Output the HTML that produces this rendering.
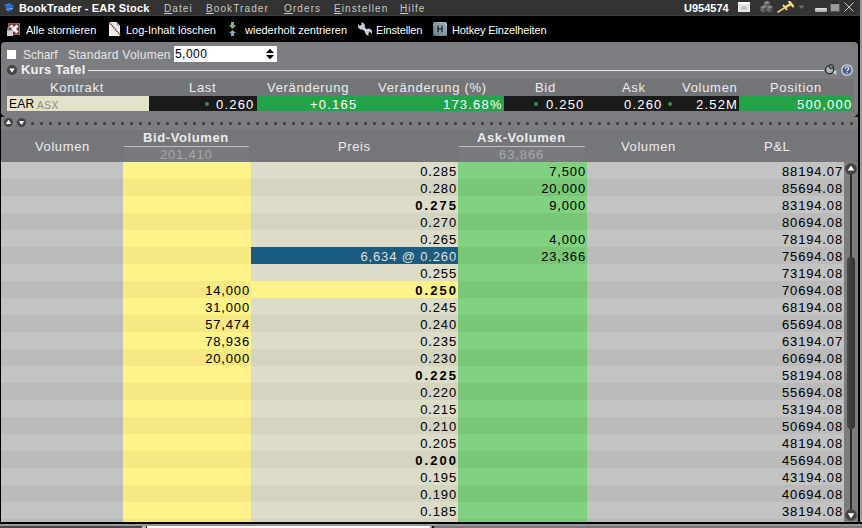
<!DOCTYPE html>
<html><head><meta charset="utf-8">
<style>
*{margin:0;padding:0;box-sizing:border-box}
html,body{width:862px;height:528px;overflow:hidden;background:#000;font-family:"Liberation Sans",sans-serif;position:relative}
.abs{position:absolute;white-space:nowrap}
#title{position:absolute;left:0;top:0;width:860px;height:16px;background:#333;border-bottom:1px solid #3e3e3e}
#rb{position:absolute;left:860px;top:0;width:2px;height:528px;background:#999}
.t{font-size:11px;color:#fff;font-weight:bold;top:2px;letter-spacing:0.15px}
.m{font-size:10px;color:#c8c8c8;top:3px;letter-spacing:1.1px}
.tbt{font-size:11px;color:#fff;top:24px}
#p1{position:absolute;left:1px;top:42px;width:857px;height:480px;background:#7c7d81;border-radius:4px 4px 0 0}
.lbl{font-size:12px;color:#e6e6e6;top:48px !important}
.hdr1{position:absolute;left:6px;top:79px;width:848px;height:17px;background:#737478}
.h1t{position:absolute;top:80px;font-size:13px;color:#ececec;white-space:nowrap;letter-spacing:0.7px}
.drow{position:absolute;top:96px;height:15px}
.dt{position:absolute;top:97px;font-size:13px;color:#fff;white-space:nowrap;letter-spacing:1.2px;line-height:15px}
.dot{position:absolute;width:4px;height:4px;border-radius:2px;background:#3a8a4a}
#dots i{position:absolute;top:122px;width:3px;height:3px;border-radius:1.5px;background:#3a3a3a}
#hdr2{position:absolute;left:1px;top:130px;width:857px;height:32px;background:#75767a}
.h2t{position:absolute;font-size:13px;color:#ececec;white-space:nowrap;letter-spacing:0.6px}
.row{position:absolute;left:1px;width:843px;overflow:hidden}
.c{position:absolute;top:0;height:17px;text-align:right;font-size:13px;line-height:19px;letter-spacing:0.85px;color:#000;white-space:nowrap;-webkit-text-stroke:0.05px #000}
.c b{font-weight:bold;letter-spacing:2.1px;margin-right:-1.2px}
.cv1{left:0;width:122px}
.cb{left:122px;width:128px;padding-right:1px}
.cp{left:250px;width:207px;padding-right:1px}
.ca{left:457px;width:129px;padding-right:1px}
.cv2{left:586px;width:120px}
.cpl{left:706px;width:137px;padding-right:1px}
.e .cv1,.e .cv2,.e .cpl{background:#c3c3c3}
.o .cv1,.o .cv2,.o .cpl{background:#bbbbbb}
.e .cb{background:#fef28a}
.o .cb{background:#f6e882}
.e .cp{background:#dcdcc8}
.o .cp{background:#d4d4c0}
.e .ca{background:#80d280}
.o .ca{background:#78c878}
.cp.hl{background:#1b5b80 !important;color:#e8e8e8}
.cp.yl{background:#fef28a !important}
#sb{position:absolute;left:844px;top:162px;width:14px;height:360px;background:#7c7c7d}
</style></head><body>
<div id="title"></div>
<div id="rb"></div>
<div id="p1"></div>

<!-- title bar text -->
<div class="abs t" style="left:19px">BookTrader - EAR Stock</div>
<div class="abs m" style="left:164px"><u>D</u>atei</div>
<div class="abs m" style="left:206px"><u>B</u>ookTrader</div>
<div class="abs m" style="left:284px"><u>O</u>rders</div>
<div class="abs m" style="left:334px"><u>E</u>instellen</div>
<div class="abs m" style="left:400px"><u>H</u>ilfe</div>
<div class="abs t" style="left:684px;letter-spacing:0">U954574</div>


<!-- title icons -->
<svg class="abs" style="left:3px;top:2px" width="12" height="11" viewBox="0 0 12 11">
<path d="M1 3 L6 1 L11 4 L6 6 Z" fill="#1e7fe0"/><path d="M2 5 L7 3 L11 6 L6 9 Z" fill="#1a6ad0"/><path d="M3 7 L10 6 L9 8 L4 9Z" fill="#c8d8e8" opacity="0.8"/><path d="M3 8 L9 7 L10 8 L5 10 Z" fill="#1560c8"/>
</svg>
<svg class="abs" style="left:737px;top:1px" width="14" height="12" viewBox="0 0 14 12">
<rect x="1" y="1" width="12" height="10" fill="#e8e8e8"/><rect x="1" y="1" width="12" height="2" fill="#fafafa"/><rect x="4" y="5" width="6" height="4" rx="1.5" fill="#c4c4c4"/>
</svg>
<svg class="abs" style="left:760px;top:0px" width="14" height="13" viewBox="0 0 14 13">
<path d="M4 2.5 L7 1 L10 2.5 L10 6.5 L7 8 L4 6.5 Z" fill="#6c6c6c"/><path d="M4 2.5 L7 1 L10 2.5 L7 4 Z" fill="#8c8c8c"/><path d="M7 4 L10 2.5 L10 6.5 L7 8 Z" fill="#555"/>
<path d="M0.5 7 L3.5 5.5 L6.5 7 L6.5 11 L3.5 12.5 L0.5 11 Z" fill="#6c6c6c"/><path d="M0.5 7 L3.5 5.5 L6.5 7 L3.5 8.5 Z" fill="#8c8c8c"/><path d="M3.5 8.5 L6.5 7 L6.5 11 L3.5 12.5 Z" fill="#4e4e4e"/>
<path d="M7 7 L10 5.5 L13 7 L13 11 L10 12.5 L7 11 Z" fill="#6c6c6c"/><path d="M7 7 L10 5.5 L13 7 L10 8.5 Z" fill="#8a8a8a"/><path d="M10 8.5 L13 7 L13 11 L10 12.5 Z" fill="#4a4a4a"/>
</svg>
<svg class="abs" style="left:777px;top:1px" width="18" height="12" viewBox="0 0 18 12">
<path d="M1 11 L8 6.5" stroke="#f0d078" stroke-width="1.6" stroke-linecap="round"/>
<path d="M6 3.8 L10 9" stroke="#f4d67c" stroke-width="2"/>
<path d="M8 6.5 L14 2.8" stroke="#f2d47a" stroke-width="2.6"/>
<path d="M12.3 0.6 L16 5.2" stroke="#f4d880" stroke-width="2.4" stroke-linecap="round"/>
</svg>
<svg class="abs" style="left:798px;top:5px" width="7" height="5" viewBox="0 0 7 5"><path d="M0.5 0.5 H6.5 L3.5 4 Z" fill="#6a6a6a"/></svg>
<div class="abs" style="left:815px;top:8px;width:12px;height:4px;border-radius:1px;background:linear-gradient(#e4e4e4,#a8a8a8)"></div>
<div class="abs" style="left:830px;top:2px;width:10px;height:10px;background:#9a9a9a;border:1px solid #555;border-top:2px solid #2a2a2a"></div>
<svg class="abs" style="left:844px;top:2px" width="10" height="10" viewBox="0 0 10 10"><path d="M0.5 0.5 L9.5 9.5 M9.5 0.5 L0.5 9.5" stroke="#c8c8c8" stroke-width="1"/></svg>

<!-- toolbar icons -->
<svg class="abs" style="left:7px;top:22px" width="14" height="15" viewBox="0 0 14 15">
<rect x="1" y="1" width="12" height="12" fill="#7a3c34"/><rect x="1.5" y="1.5" width="11" height="11" fill="none" stroke="#a06058" stroke-width="1"/>
<path d="M3.5 3.5 L10.5 10.5 M10.5 3.5 L3.5 10.5" stroke="#f4f4f4" stroke-width="3"/>
<rect x="0" y="8" width="6" height="6" fill="#d0d0d0"/><rect x="1" y="5.5" width="4" height="3" fill="none" stroke="#9aa" stroke-width="1"/>
</svg>
<svg class="abs" style="left:108px;top:21px" width="14" height="16" viewBox="0 0 14 16">
<path d="M1 1 H8.5 L12 4.5 V15 H1 Z" fill="#eeeeee"/><path d="M8.5 1 V4.5 H12 Z" fill="#9aa4ac"/>
<path d="M1 1 L13 15" stroke="#802828" stroke-width="1.5" stroke-dasharray="1.5 0.8"/>
</svg>
<svg class="abs" style="left:228px;top:21px" width="9" height="16" viewBox="0 0 9 16">
<path d="M3 1 H6 V4 H8 L4.5 8 L1 4 H3 Z" fill="#7cc07c"/><path d="M4.5 9 L8 12 H6 V15 H3 V12 H1 Z" fill="#90a8c4"/>
</svg>
<svg class="abs" style="left:357px;top:21px" width="16" height="16" viewBox="0 0 16 16">
<path d="M3.5 4.5 L11.5 12" stroke="#c8d0e0" stroke-width="3"/>
<path d="M1.5 3 L3 5.5 L5 4 L4 1.5 A3.5 3.5 0 1 1 1.5 3 Z" fill="#c8d0e0"/>
<path d="M14.5 13 L13 10.5 L11 12 L12 14.5 A3.5 3.5 0 1 1 14.5 13 Z" fill="#c8d0e0"/>
</svg>
<svg class="abs" style="left:433px;top:22px" width="14" height="14" viewBox="0 0 14 14">
<defs><linearGradient id="hg" x1="0" y1="1" x2="1" y2="0"><stop offset="0" stop-color="#587282"/><stop offset="1" stop-color="#a8bac6"/></linearGradient></defs>
<rect x="0" y="0" width="14" height="14" rx="1.5" fill="url(#hg)"/><rect x="2" y="2" width="10" height="10" fill="#8aa0ae" opacity="0.6"/>
<path d="M5 3.8 V10.2 M9 3.8 V10.2 M5 7 H9" stroke="#0a0a0a" stroke-width="1.1"/>
</svg>

<!-- toolbar -->
<div class="abs tbt" style="left:26px">Alle stornieren</div>
<div class="abs tbt" style="left:126px">Log-Inhalt löschen</div>
<div class="abs tbt" style="left:245px">wiederholt zentrieren</div>
<div class="abs tbt" style="left:376px;letter-spacing:-0.15px">Einstellen</div>
<div class="abs tbt" style="left:452px;letter-spacing:-0.15px">Hotkey Einzelheiten</div>

<!-- panel 1 -->
<div class="abs" style="left:7px;top:50px;width:9px;height:9px;background:#fff"></div>
<div class="abs lbl" style="left:23px;top:47px">Scharf</div>
<div class="abs lbl" style="left:68px;top:47px;letter-spacing:0.25px">Standard Volumen</div>
<div class="abs" style="left:174px;top:46px;width:103px;height:16px;background:#fff"></div>
<div class="abs" style="left:175px;top:47px;font-size:12px;color:#000;letter-spacing:0.45px">5,000</div>
<svg class="abs" style="left:266px;top:48px" width="8" height="12" viewBox="0 0 8 12"><path d="M4 0.8 L8 5 H0 Z M0 7 H8 L4 11.2 Z" fill="#000"/></svg>
<svg class="abs" style="left:7px;top:65px" width="10" height="10" viewBox="0 0 10 10"><circle cx="5" cy="5" r="5" fill="#444"/><path d="M2.2 3.5 H7.8 L5 7.5 Z" fill="#fff"/></svg>
<div class="abs" style="left:21px;top:62px;font-size:13px;font-weight:bold;color:#f0f0f0;letter-spacing:0.2px">Kurs Tafel</div>
<div class="abs" style="left:88px;top:70px;width:736px;height:1px;background:#e6e6e6"></div>

<svg class="abs" style="left:825px;top:64px" width="12" height="12" viewBox="0 0 12 12">
<path d="M5.5 7 L11.3 6.5 L11.3 11.3 Z" fill="#c4ccd4"/>
<circle cx="4.6" cy="5.8" r="4" fill="#aab2ba" stroke="#1a1a1a" stroke-width="1.1"/>
<circle cx="6.2" cy="2.6" r="2.1" fill="#7b7c80" stroke="#1a1a1a" stroke-width="0.9"/>
<path d="M3.6 1.4 L5.2 4.2 L8.4 3.2" fill="none" stroke="#1a1a1a" stroke-width="0" />
</svg>
<svg class="abs" style="left:841px;top:64px" width="12" height="12" viewBox="0 0 12 12">
<circle cx="6" cy="6" r="5.2" fill="#44648a" stroke="#d8d8d8" stroke-width="1.3"/>
<path d="M4.4 4.7 A1.7 1.6 0 1 1 6.5 6.1 Q6 6.5 6 7.2" fill="none" stroke="#e8e8e8" stroke-width="1.2"/><rect x="5.4" y="8.1" width="1.2" height="1.2" fill="#e8e8e8"/>
</svg>
<div class="hdr1"></div>
<div class="h1t" style="left:50px">Kontrakt</div>
<div class="h1t" style="left:189px">Last</div>
<div class="h1t" style="left:267px">Veränderung</div>
<div class="h1t" style="left:378px">Veränderung (%)</div>
<div class="h1t" style="left:535px">Bid</div>
<div class="h1t" style="left:622px">Ask</div>
<div class="h1t" style="left:682px">Volumen</div>
<div class="h1t" style="left:770px">Position</div>

<div class="drow" style="left:7px;width:142px;background:#e4e2c8"></div>
<div class="drow" style="left:149px;width:108px;background:#1a1a1a"></div>
<div class="drow" style="left:257px;width:247px;background:#22a34a"></div>
<div class="drow" style="left:504px;width:235px;background:#1a1a1a"></div>
<div class="drow" style="left:739px;width:113px;background:#22a34a"></div>
<div class="abs" style="left:853px;top:95px;width:1px;height:17px;background:#2a9a4a"></div>
<div class="abs" style="left:9px;top:96px;font-size:12px;line-height:16px;color:#000;letter-spacing:0.2px">EAR</div><div class="abs" style="left:37px;top:97px;font-size:10px;line-height:15px;color:#8a8a80;letter-spacing:0.6px;top:97.5px">ASX</div>
<div class="dt" style="left:216px">0.260</div>
<div class="dt" style="left:310px">+0.165</div>
<div class="dt" style="left:443px">173.68%</div>
<div class="dt" style="left:546px">0.250</div>
<div class="dt" style="left:624px">0.260</div>
<div class="dt" style="left:696px">2.52M</div>
<div class="dt" style="left:797px">500,000</div>
<div class="dot" style="left:205px;top:102px"></div>
<div class="dot" style="left:534px;top:102px"></div>
<div class="dot" style="left:668px;top:102px"></div>

<!-- panel 2 -->
<svg class="abs" style="left:853px;top:111px" width="6" height="6" viewBox="0 0 6 6"><path d="M6 0 H5 V1 Q5 4.5 1 5.5 L5 6 H6 Z" fill="#000"/></svg>
<svg class="abs" style="left:0;top:111px" width="6" height="6" viewBox="0 0 6 6"><path d="M0 0 H1 V1 Q1 4.5 5 5.5 L1 6 H0 Z" fill="#000"/></svg>
<div id="dots"><i style="left:31px"></i><i style="left:40px"></i><i style="left:49px"></i><i style="left:58px"></i><i style="left:67px"></i><i style="left:76px"></i><i style="left:85px"></i><i style="left:94px"></i><i style="left:103px"></i><i style="left:112px"></i><i style="left:121px"></i><i style="left:130px"></i><i style="left:139px"></i><i style="left:148px"></i><i style="left:157px"></i><i style="left:166px"></i><i style="left:175px"></i><i style="left:184px"></i><i style="left:193px"></i><i style="left:202px"></i><i style="left:211px"></i><i style="left:220px"></i><i style="left:229px"></i><i style="left:238px"></i><i style="left:247px"></i><i style="left:256px"></i><i style="left:265px"></i><i style="left:274px"></i><i style="left:283px"></i><i style="left:292px"></i><i style="left:301px"></i><i style="left:310px"></i><i style="left:319px"></i><i style="left:328px"></i><i style="left:337px"></i><i style="left:346px"></i><i style="left:355px"></i><i style="left:364px"></i><i style="left:373px"></i><i style="left:382px"></i><i style="left:391px"></i><i style="left:400px"></i><i style="left:409px"></i><i style="left:418px"></i><i style="left:427px"></i><i style="left:436px"></i><i style="left:445px"></i><i style="left:454px"></i><i style="left:463px"></i><i style="left:472px"></i><i style="left:481px"></i><i style="left:490px"></i><i style="left:499px"></i><i style="left:508px"></i><i style="left:517px"></i><i style="left:526px"></i><i style="left:535px"></i><i style="left:544px"></i><i style="left:553px"></i><i style="left:562px"></i><i style="left:571px"></i><i style="left:580px"></i><i style="left:589px"></i><i style="left:598px"></i><i style="left:607px"></i><i style="left:616px"></i><i style="left:625px"></i><i style="left:634px"></i><i style="left:643px"></i><i style="left:652px"></i><i style="left:661px"></i><i style="left:670px"></i><i style="left:679px"></i><i style="left:688px"></i><i style="left:697px"></i><i style="left:706px"></i><i style="left:715px"></i><i style="left:724px"></i><i style="left:733px"></i><i style="left:742px"></i><i style="left:751px"></i><i style="left:760px"></i><i style="left:769px"></i><i style="left:778px"></i><i style="left:787px"></i><i style="left:796px"></i><i style="left:805px"></i><i style="left:814px"></i><i style="left:823px"></i><i style="left:832px"></i><i style="left:841px"></i><i style="left:850px"></i></div>
<svg class="abs" style="left:4px;top:118px" width="9" height="9" viewBox="0 0 9 9"><circle cx="4.5" cy="4.5" r="4.5" fill="#444"/><path d="M4.5 1.8 L7.2 6 H1.8 Z" fill="#fff"/></svg>
<svg class="abs" style="left:17px;top:118px" width="9" height="9" viewBox="0 0 9 9"><circle cx="4.5" cy="4.5" r="4.5" fill="#444"/><path d="M1.8 3 H7.2 L4.5 7 Z" fill="#fff"/></svg>
<div id="hdr2"></div>
<div class="abs" style="left:124px;top:147px;width:125px;height:15px;background:#797a7e"></div>
<div class="abs" style="left:459px;top:147px;width:126px;height:15px;background:#797a7e"></div>
<div class="abs" style="left:124px;top:146px;width:125px;height:1px;background:#bdbdbd"></div>
<div class="abs" style="left:459px;top:146px;width:126px;height:1px;background:#bdbdbd"></div>
<div class="h2t" style="left:35px;top:139px">Volumen</div>
<div class="h2t" style="left:143px;top:130px;font-weight:bold">Bid-Volumen</div>
<div class="h2t" style="left:160px;top:147px;color:#a8a8a8;letter-spacing:0.8px">201,410</div>
<div class="h2t" style="left:338px;top:139px">Preis</div>
<div class="h2t" style="left:477px;top:130px;font-weight:bold">Ask-Volumen</div>
<div class="h2t" style="left:499px;top:147px;color:#a8a8a8;letter-spacing:0.9px">63,866</div>
<div class="h2t" style="left:621px;top:139px">Volumen</div>
<div class="h2t" style="left:764px;top:139px">P&amp;L</div>

<div class="row e" style="top:162px;height:17px">
<div class="c cv1"></div>
<div class="c cb"></div>
<div class="c cp">0.285</div>
<div class="c ca">7,500</div>
<div class="c cv2"></div>
<div class="c cpl">88194.07</div>
</div>
<div class="row o" style="top:179px;height:17px">
<div class="c cv1"></div>
<div class="c cb"></div>
<div class="c cp">0.280</div>
<div class="c ca">20,000</div>
<div class="c cv2"></div>
<div class="c cpl">85694.08</div>
</div>
<div class="row e" style="top:196px;height:17px">
<div class="c cv1"></div>
<div class="c cb"></div>
<div class="c cp"><b>0.275</b></div>
<div class="c ca">9,000</div>
<div class="c cv2"></div>
<div class="c cpl">83194.08</div>
</div>
<div class="row o" style="top:213px;height:17px">
<div class="c cv1"></div>
<div class="c cb"></div>
<div class="c cp">0.270</div>
<div class="c ca"></div>
<div class="c cv2"></div>
<div class="c cpl">80694.08</div>
</div>
<div class="row e" style="top:230px;height:17px">
<div class="c cv1"></div>
<div class="c cb"></div>
<div class="c cp">0.265</div>
<div class="c ca">4,000</div>
<div class="c cv2"></div>
<div class="c cpl">78194.08</div>
</div>
<div class="row o" style="top:247px;height:17px">
<div class="c cv1"></div>
<div class="c cb"></div>
<div class="c cp hl">6,634 @ 0.260</div>
<div class="c ca">23,366</div>
<div class="c cv2"></div>
<div class="c cpl">75694.08</div>
</div>
<div class="row e" style="top:264px;height:17px">
<div class="c cv1"></div>
<div class="c cb"></div>
<div class="c cp">0.255</div>
<div class="c ca"></div>
<div class="c cv2"></div>
<div class="c cpl">73194.08</div>
</div>
<div class="row o" style="top:281px;height:17px">
<div class="c cv1"></div>
<div class="c cb">14,000</div>
<div class="c cp yl"><b>0.250</b></div>
<div class="c ca"></div>
<div class="c cv2"></div>
<div class="c cpl">70694.08</div>
</div>
<div class="row e" style="top:298px;height:17px">
<div class="c cv1"></div>
<div class="c cb">31,000</div>
<div class="c cp">0.245</div>
<div class="c ca"></div>
<div class="c cv2"></div>
<div class="c cpl">68194.08</div>
</div>
<div class="row o" style="top:315px;height:17px">
<div class="c cv1"></div>
<div class="c cb">57,474</div>
<div class="c cp">0.240</div>
<div class="c ca"></div>
<div class="c cv2"></div>
<div class="c cpl">65694.08</div>
</div>
<div class="row e" style="top:332px;height:17px">
<div class="c cv1"></div>
<div class="c cb">78,936</div>
<div class="c cp">0.235</div>
<div class="c ca"></div>
<div class="c cv2"></div>
<div class="c cpl">63194.07</div>
</div>
<div class="row o" style="top:349px;height:17px">
<div class="c cv1"></div>
<div class="c cb">20,000</div>
<div class="c cp">0.230</div>
<div class="c ca"></div>
<div class="c cv2"></div>
<div class="c cpl">60694.08</div>
</div>
<div class="row e" style="top:366px;height:17px">
<div class="c cv1"></div>
<div class="c cb"></div>
<div class="c cp"><b>0.225</b></div>
<div class="c ca"></div>
<div class="c cv2"></div>
<div class="c cpl">58194.08</div>
</div>
<div class="row o" style="top:383px;height:17px">
<div class="c cv1"></div>
<div class="c cb"></div>
<div class="c cp">0.220</div>
<div class="c ca"></div>
<div class="c cv2"></div>
<div class="c cpl">55694.08</div>
</div>
<div class="row e" style="top:400px;height:17px">
<div class="c cv1"></div>
<div class="c cb"></div>
<div class="c cp">0.215</div>
<div class="c ca"></div>
<div class="c cv2"></div>
<div class="c cpl">53194.08</div>
</div>
<div class="row o" style="top:417px;height:17px">
<div class="c cv1"></div>
<div class="c cb"></div>
<div class="c cp">0.210</div>
<div class="c ca"></div>
<div class="c cv2"></div>
<div class="c cpl">50694.08</div>
</div>
<div class="row e" style="top:434px;height:17px">
<div class="c cv1"></div>
<div class="c cb"></div>
<div class="c cp">0.205</div>
<div class="c ca"></div>
<div class="c cv2"></div>
<div class="c cpl">48194.08</div>
</div>
<div class="row o" style="top:451px;height:17px">
<div class="c cv1"></div>
<div class="c cb"></div>
<div class="c cp"><b>0.200</b></div>
<div class="c ca"></div>
<div class="c cv2"></div>
<div class="c cpl">45694.08</div>
</div>
<div class="row e" style="top:468px;height:17px">
<div class="c cv1"></div>
<div class="c cb"></div>
<div class="c cp">0.195</div>
<div class="c ca"></div>
<div class="c cv2"></div>
<div class="c cpl">43194.08</div>
</div>
<div class="row o" style="top:485px;height:17px">
<div class="c cv1"></div>
<div class="c cb"></div>
<div class="c cp">0.190</div>
<div class="c ca"></div>
<div class="c cv2"></div>
<div class="c cpl">40694.08</div>
</div>
<div class="row e" style="top:502px;height:17px">
<div class="c cv1"></div>
<div class="c cb"></div>
<div class="c cp">0.185</div>
<div class="c ca"></div>
<div class="c cv2"></div>
<div class="c cpl">38194.08</div>
</div>
<div class="row o" style="top:519px;height:3px">
<div class="c cv1"></div>
<div class="c cb"></div>
<div class="c cp"></div>
<div class="c ca"></div>
<div class="c cv2"></div>
<div class="c cpl"></div>
</div>

<div id="sb"></div>
<div class="abs" style="left:850px;top:172px;width:2px;height:340px;background:#2c2c2c"></div>
<div class="abs" style="left:847px;top:257px;width:8px;height:172px;border-radius:4px;background:linear-gradient(90deg,#4a4a4a,#3a3a3a 60%,#343434)"></div>
<svg class="abs" style="left:845px;top:163px" width="12" height="12" viewBox="0 0 12 12"><circle cx="6" cy="6" r="5.8" fill="#444"/><path d="M6 2.6 L9.3 7.4 H2.7 Z" fill="#fff"/></svg>
<svg class="abs" style="left:845px;top:509px" width="12" height="12" viewBox="0 0 12 12"><circle cx="6" cy="6" r="5.8" fill="#444"/><path d="M2.7 4.2 H9.3 L6 9.2 Z" fill="#fff"/></svg>
<div class="abs" style="left:0;top:522px;width:862px;height:2px;background:#000"></div>
<div class="abs" style="left:0;top:524px;width:862px;height:2px;background:#969696"></div>
<div class="abs" style="left:0;top:526px;width:142px;height:2px;background:#474747"></div>
<div class="abs" style="left:142px;top:526px;width:4px;height:2px;background:#b8b0e0"></div>
<div class="abs" style="left:146px;top:526px;width:1px;height:2px;background:#222"></div>
<div class="abs" style="left:147px;top:526px;width:283px;height:2px;background:#fff"></div>
<div class="abs" style="left:430px;top:526px;width:2px;height:2px;background:#999"></div>
<div class="abs" style="left:432px;top:526px;width:2px;height:2px;background:#111"></div>
<div class="abs" style="left:434px;top:526px;width:428px;height:2px;background:#7a7a7a"></div>
</body></html>
